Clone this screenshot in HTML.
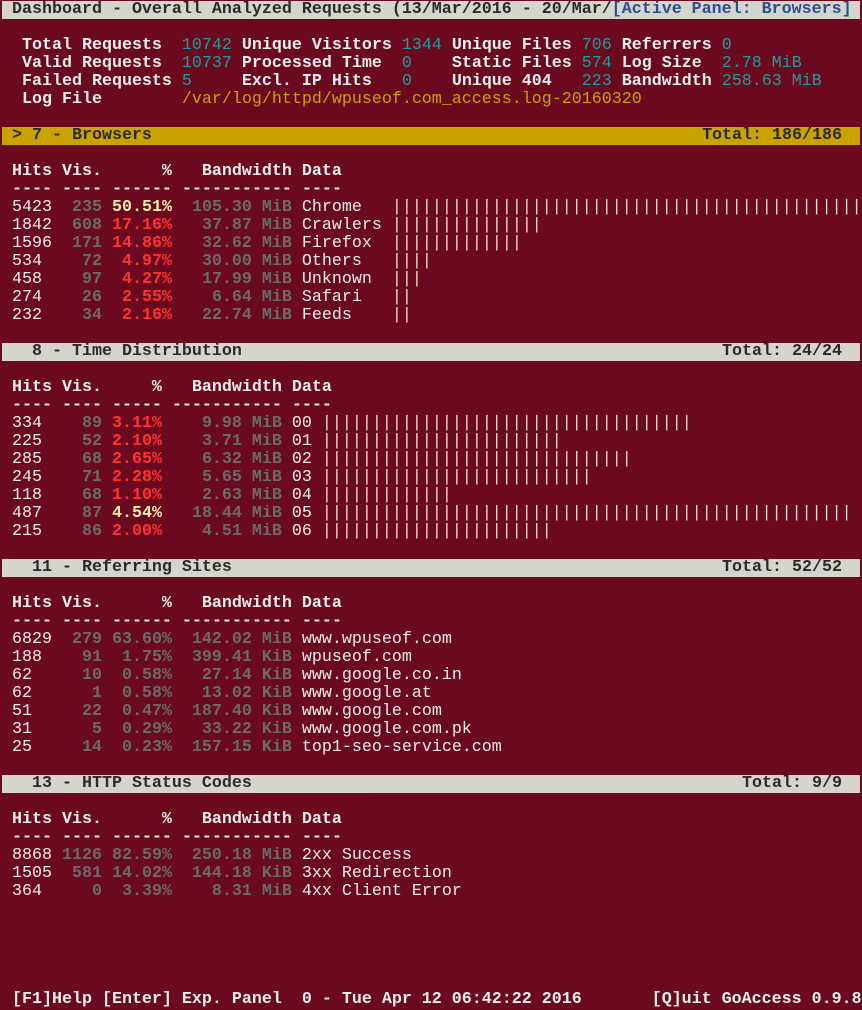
<!DOCTYPE html>
<html><head><meta charset="utf-8"><style>
html,body{margin:0;padding:0;background:#6b0a1e;width:862px;height:1010px;overflow:hidden}
.r{position:absolute;left:2px;height:18px;line-height:18px;white-space:pre;font-family:"Liberation Mono",monospace;font-size:16.67px;color:#ececec}
.t{position:absolute;right:20px;height:18px;line-height:18px;white-space:pre;font-family:"Liberation Mono",monospace;font-size:16.67px;color:#2a2a2a;font-weight:bold}
.bar{position:absolute;left:2px;width:858px;height:18px}
.w{color:#eeeeee;font-weight:bold}
.c{color:#1f9c9c}
.y{color:#c9a200}
.g{color:#6a6a6a;font-weight:bold}
.red{color:#ff3333;font-weight:bold}
.cr{color:#fbefb0;font-weight:bold}
.bl{color:#2b4e8c}
.d{color:#2a2a2a;font-weight:bold}
.lb{color:#e8dcc0}
</style></head><body>
<div class="bar" style="top:1px;background:#d5d5cd"></div>
<div class="r d" style="top:1px"> Dashboard - Overall Analyzed Requests (13/Mar/2016 - 20/Mar/<span class="bl">[Active Panel: Browsers]</span></div>

<div class="r" style="top:37px"><span class="w">  Total Requests  </span><span class="c">10742 </span><span class="w">Unique Visitors </span><span class="c">1344 </span><span class="w">Unique Files </span><span class="c">706 </span><span class="w">Referrers </span><span class="c">0</span></div>
<div class="r" style="top:55px"><span class="w">  Valid Requests  </span><span class="c">10737 </span><span class="w">Processed Time  </span><span class="c">0    </span><span class="w">Static Files </span><span class="c">574 </span><span class="w">Log Size  </span><span class="c">2.78 MiB</span></div>
<div class="r" style="top:73px"><span class="w">  Failed Requests </span><span class="c">5     </span><span class="w">Excl. IP Hits   </span><span class="c">0    </span><span class="w">Unique 404   </span><span class="c">223 </span><span class="w">Bandwidth </span><span class="c">258.63 MiB</span></div>
<div class="r" style="top:91px"><span class="w">  Log File        </span><span class="y">/var/log/httpd/wpuseof.com_access.log-20160320</span></div>

<div class="bar" style="top:127px;background:#c9a200"></div>
<div class="r d" style="top:127px"> &gt; 7 - Browsers</div>
<div class="t" style="top:127px">Total: 186/186</div>
<div class="r w" style="top:163px"> Hits Vis.      %   Bandwidth Data</div>
<div class="r w" style="top:181px"> ---- ---- ------ ----------- ----</div>
<div class="r" style="top:199px"> 5423 <span class="g"> 235</span> <span class="cr">50.51%</span> <span class="g"> 105.30 MiB</span> Chrome   <span class="lb">|||||||||||||||||||||||||||||||||||||||||||||||</span></div>
<div class="r" style="top:217px"> 1842 <span class="g"> 608</span> <span class="red">17.16%</span> <span class="g">  37.87 MiB</span> Crawlers <span class="lb">|||||||||||||||</span></div>
<div class="r" style="top:235px"> 1596 <span class="g"> 171</span> <span class="red">14.86%</span> <span class="g">  32.62 MiB</span> Firefox  <span class="lb">|||||||||||||</span></div>
<div class="r" style="top:253px"> 534  <span class="g">  72</span> <span class="red"> 4.97%</span> <span class="g">  30.00 MiB</span> Others   <span class="lb">||||</span></div>
<div class="r" style="top:271px"> 458  <span class="g">  97</span> <span class="red"> 4.27%</span> <span class="g">  17.99 MiB</span> Unknown  <span class="lb">|||</span></div>
<div class="r" style="top:289px"> 274  <span class="g">  26</span> <span class="red"> 2.55%</span> <span class="g">   6.64 MiB</span> Safari   <span class="lb">||</span></div>
<div class="r" style="top:307px"> 232  <span class="g">  34</span> <span class="red"> 2.16%</span> <span class="g">  22.74 MiB</span> Feeds    <span class="lb">||</span></div>

<div class="bar" style="top:343px;background:#d5d5cd"></div>
<div class="r d" style="top:343px">   8 - Time Distribution</div>
<div class="t" style="top:343px">Total: 24/24</div>
<div class="r w" style="top:379px"> Hits Vis.     %   Bandwidth Data</div>
<div class="r w" style="top:397px"> ---- ---- ----- ----------- ----</div>
<div class="r" style="top:415px"> 334  <span class="g">  89</span> <span class="red">3.11%</span> <span class="g">   9.98 MiB</span> 00 <span class="lb">|||||||||||||||||||||||||||||||||||||</span></div>
<div class="r" style="top:433px"> 225  <span class="g">  52</span> <span class="red">2.10%</span> <span class="g">   3.71 MiB</span> 01 <span class="lb">||||||||||||||||||||||||</span></div>
<div class="r" style="top:451px"> 285  <span class="g">  68</span> <span class="red">2.65%</span> <span class="g">   6.32 MiB</span> 02 <span class="lb">|||||||||||||||||||||||||||||||</span></div>
<div class="r" style="top:469px"> 245  <span class="g">  71</span> <span class="red">2.28%</span> <span class="g">   5.65 MiB</span> 03 <span class="lb">|||||||||||||||||||||||||||</span></div>
<div class="r" style="top:487px"> 118  <span class="g">  68</span> <span class="red">1.10%</span> <span class="g">   2.63 MiB</span> 04 <span class="lb">|||||||||||||</span></div>
<div class="r" style="top:505px"> 487  <span class="g">  87</span> <span class="cr">4.54%</span> <span class="g">  18.44 MiB</span> 05 <span class="lb">|||||||||||||||||||||||||||||||||||||||||||||||||||||</span></div>
<div class="r" style="top:523px"> 215  <span class="g">  86</span> <span class="red">2.00%</span> <span class="g">   4.51 MiB</span> 06 <span class="lb">|||||||||||||||||||||||</span></div>

<div class="bar" style="top:559px;background:#d5d5cd"></div>
<div class="r d" style="top:559px">   11 - Referring Sites</div>
<div class="t" style="top:559px">Total: 52/52</div>
<div class="r w" style="top:595px"> Hits Vis.      %   Bandwidth Data</div>
<div class="r w" style="top:613px"> ---- ---- ------ ----------- ----</div>
<div class="r" style="top:631px"> 6829 <span class="g"> 279 63.60%  142.02 MiB</span> www.wpuseof.com</div>
<div class="r" style="top:649px"> 188  <span class="g">  91  1.75%  399.41 KiB</span> wpuseof.com</div>
<div class="r" style="top:667px"> 62   <span class="g">  10  0.58%   27.14 KiB</span> www.google.co.in</div>
<div class="r" style="top:685px"> 62   <span class="g">   1  0.58%   13.02 KiB</span> www.google.at</div>
<div class="r" style="top:703px"> 51   <span class="g">  22  0.47%  187.40 KiB</span> www.google.com</div>
<div class="r" style="top:721px"> 31   <span class="g">   5  0.29%   33.22 KiB</span> www.google.com.pk</div>
<div class="r" style="top:739px"> 25   <span class="g">  14  0.23%  157.15 KiB</span> top1-seo-service.com</div>

<div class="bar" style="top:775px;background:#d5d5cd"></div>
<div class="r d" style="top:775px">   13 - HTTP Status Codes</div>
<div class="t" style="top:775px">Total: 9/9</div>
<div class="r w" style="top:811px"> Hits Vis.      %   Bandwidth Data</div>
<div class="r w" style="top:829px"> ---- ---- ------ ----------- ----</div>
<div class="r" style="top:847px"> 8868 <span class="g">1126 82.59%  250.18 MiB</span> 2xx Success</div>
<div class="r" style="top:865px"> 1505 <span class="g"> 581 14.02%  144.18 KiB</span> 3xx Redirection</div>
<div class="r" style="top:883px"> 364  <span class="g">   0  3.39%    8.31 MiB</span> 4xx Client Error</div>

<div class="r w" style="top:991px"> [F1]Help [Enter] Exp. Panel  0 - Tue Apr 12 06:42:22 2016       [Q]uit GoAccess 0.9.8</div>
</body></html>
